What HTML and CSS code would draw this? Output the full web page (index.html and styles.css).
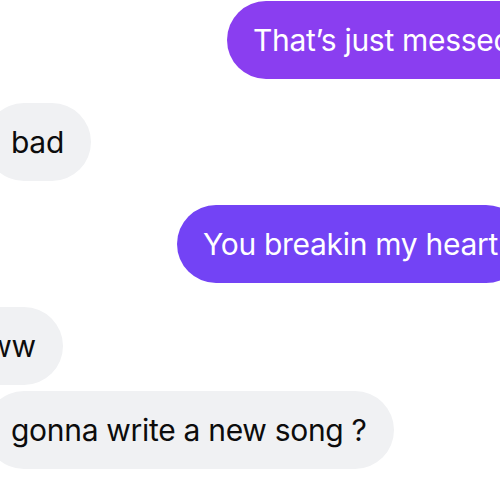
FILE: index.html
```html
<!DOCTYPE html>
<html lang="en">
<head>
<meta charset="utf-8">
<link rel="stylesheet" href="styles.css">
</head>
<body>
<div class="chat">
  <div class="row out"><div class="bubble sent first">That’s just messed up</div></div>
  <div class="row in gap"><div class="bubble recv bad">bad</div></div>
  <div class="row out gap"><div class="bubble sent second">You breakin my heart</div></div>
  <div class="row in gap"><div class="bubble recv ww">Aww</div></div>
  <div class="row in tight"><div class="bubble recv song">gonna write a new song ?</div></div>
</div>
</body>
</html>
```
FILE: styles.css
```css
html, body {
  margin: 0;
  padding: 0;
  background: #ffffff;
  overflow: hidden;
  width: 500px;
  height: 500px;
}
.chat {
  display: flex;
  flex-direction: column;
  padding-top: 1px;
  font-family: Inter, "Noto Sans", sans-serif;
  font-size: 30px;
  letter-spacing: -0.3px;
}
.row {
  display: flex;
}
.row.gap { margin-top: 24px; }
.row.tight { margin-top: 6px; }
.bubble {
  height: 78px;
  box-sizing: border-box;
  border-radius: 39px;
  display: flex;
  align-items: center;
  padding: 0 27px 0 26px;
  white-space: nowrap;
  flex-shrink: 0;
  line-height: 1;
}
.sent { color: #ffffff; }
.first { background: #8a3ef0; margin-left: 227px; }
.second { background: #7343f5; margin-left: 177px; }
.recv { background: #f0f1f3; color: #0c0c0c; }
.bad { margin-left: -15px; }
.ww { margin-left: -57px; }
.song { margin-left: -15px; }
```
